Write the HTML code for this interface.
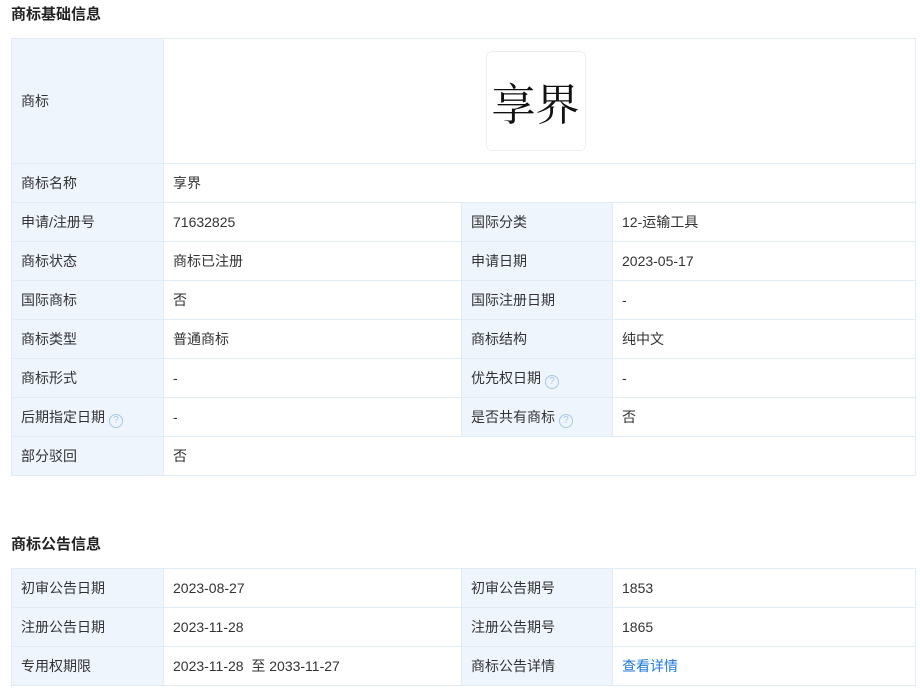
<!DOCTYPE html>
<html><head><meta charset="utf-8"><style>
*{margin:0;padding:0;box-sizing:border-box}
body{width:920px;height:691px;background:#fff;font-family:"Liberation Sans","Noto Sans CJK SC",sans-serif;color:#333;font-size:14px;position:relative;overflow:hidden}
h3{position:absolute;left:11px;font-size:15px;font-weight:bold;color:#222;line-height:20px}
table{position:absolute;left:11px;width:904px;border-collapse:collapse;table-layout:fixed}
td{border:1px solid #e2ecf6;height:39px;padding:0 0 0 9px;vertical-align:middle;white-space:nowrap}
td.l{background:#eef5fd}
.q{display:inline-block;width:14px;height:14px;border:1px solid #a9c8ea;border-radius:50%;color:#a9c8ea;font-size:10px;line-height:12px;text-align:center;margin-left:4px;vertical-align:-1px}
a{color:#1f7ae0;text-decoration:none}
.logo{width:100px;height:100px;border:1px solid #eee;border-radius:6px;margin:0 auto;display:flex;align-items:center;justify-content:center;font-family:"Noto Serif CJK SC",serif;font-size:44px;color:#111;position:relative;left:-4px}
</style></head><body>
<h3 style="top:5px">商标基础信息</h3>
<table style="top:38px">
<colgroup><col style="width:152px"><col style="width:298px"><col style="width:151px"><col style="width:303px"></colgroup>
<tr><td class="l" style="height:125px">商标</td><td colspan="3" style="padding:0"><div class="logo">享界</div></td></tr>
<tr><td class="l">商标名称</td><td colspan="3">享界</td></tr>
<tr><td class="l">申请/注册号</td><td>71632825</td><td class="l">国际分类</td><td>12-运输工具</td></tr>
<tr><td class="l">商标状态</td><td>商标已注册</td><td class="l">申请日期</td><td>2023-05-17</td></tr>
<tr><td class="l">国际商标</td><td>否</td><td class="l">国际注册日期</td><td>-</td></tr>
<tr><td class="l">商标类型</td><td>普通商标</td><td class="l">商标结构</td><td>纯中文</td></tr>
<tr><td class="l">商标形式</td><td>-</td><td class="l">优先权日期<span class="q">?</span></td><td>-</td></tr>
<tr><td class="l">后期指定日期<span class="q">?</span></td><td>-</td><td class="l">是否共有商标<span class="q">?</span></td><td>否</td></tr>
<tr><td class="l">部分驳回</td><td colspan="3">否</td></tr>
</table>
<h3 style="top:535px">商标公告信息</h3>
<table style="top:568px">
<colgroup><col style="width:152px"><col style="width:298px"><col style="width:151px"><col style="width:303px"></colgroup>
<tr><td class="l">初审公告日期</td><td>2023-08-27</td><td class="l">初审公告期号</td><td>1853</td></tr>
<tr><td class="l">注册公告日期</td><td>2023-11-28</td><td class="l">注册公告期号</td><td>1865</td></tr>
<tr><td class="l">专用权期限</td><td>2023-11-28 &nbsp;至 2033-11-27</td><td class="l">商标公告详情</td><td><a>查看详情</a></td></tr>
</table>
</body></html>
